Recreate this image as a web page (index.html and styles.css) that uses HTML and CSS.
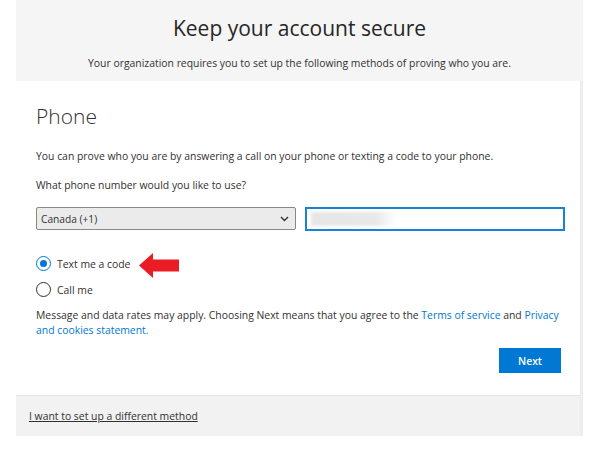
FILE: index.html
```html
<!DOCTYPE html>
<html>
<head>
<meta charset="utf-8">
<link rel="stylesheet" href="styles.css">
</head>
<body>
<div class="page">
  <div class="header">
    <h1 class="title">Keep your account secure</h1>
    <p class="subtitle">Your organization requires you to set up the following methods of proving who you are.</p>
  </div>
  <div class="card">
    <div class="card-body">
      <h2 class="heading">Phone</h2>
      <p class="text intro">You can prove who you are by answering a call on your phone or texting a code to your phone.</p>
      <p class="text question">What phone number would you like to use?</p>
      <div class="inputs">
        <div class="select">
          <span>Canada (+1)</span>
          <svg class="chev" width="9" height="6" viewBox="0 0 9 6"><path d="M1 1l3.5 3.5L8 1" fill="none" stroke="#323130" stroke-width="1.4"/></svg>
        </div>
        <div class="phone"><span class="blur"></span></div>
      </div>
      <div class="options">
        <label class="option">
          <span class="radio checked"><span class="dot"></span></span>
          <span>Text me a code</span>
          <svg class="arrow" width="41" height="25" viewBox="0 0 41 25"><path d="M0 12.5L14 0V6.5H40V18.5H14V25Z" fill="#ea1c24"/></svg>
        </label>
        <label class="option">
          <span class="radio"></span>
          <span>Call me</span>
        </label>
      </div>
      <p class="text legal">Message and data rates may apply. Choosing Next means that you agree to the <a href="#">Terms of service</a> and <a href="#">Privacy and cookies statement.</a></p>
      <div class="actions"><button class="next">Next</button></div>
    </div>
    <div class="footer"><a href="#" class="other">I want to set up a different method</a></div>
  </div>
</div>
</body>
</html>
```
FILE: styles.css
```css
* { box-sizing: border-box; }
body {
  margin: 0;
  background: #fff;
  font-family: "Open Sans", "Noto Sans", sans-serif;
  color: #323130;
}
.page {
  margin-left: 16px;
  width: 567px;
  background: #f5f5f5;
}
.header {
  height: 81px;
  padding-top: 13px;
  text-align: center;
}
.title {
  margin: 0;
  font-weight: 400;
  font-size: 21px;
  line-height: 30px;
  color: #262626;
}
.subtitle {
  margin: 13px 0 0;
  font-size: 10.4px;
  line-height: 14px;
}
.card {
  border-right: 3px solid #ededed;
  background: #fff;
}
.card-body {
  height: 314px;
  padding: 22px 15px 0 20px;
}
.heading {
  margin: 0;
  font-weight: 300;
  font-size: 21px;
  line-height: 26px;
  color: #323130;
}
.text {
  margin: 0;
  font-size: 10.4px;
  line-height: 15px;
}
.intro { margin-top: 20px; }
.question { margin-top: 14px; }
.inputs {
  display: flex;
  gap: 9px;
  margin-top: 14px;
}
.select {
  width: 261px;
  height: 23px;
  border: 1px solid #8a8886;
  border-radius: 2px;
  background: #ebebeb;
  display: flex;
  align-items: center;
  justify-content: space-between;
  padding: 0 6px 0 4px;
  font-size: 10.2px;
}
.phone {
  width: 262px;
  height: 24px;
  border: 2px solid #1a82d6;
  padding: 3px 4px;
}
.blur {
  display: block;
  width: 86px;
  height: 14px;
  background: linear-gradient(90deg, #e6e6e6 0%, #e8e8e8 75%, #fff 100%);
  filter: blur(1.5px);
}
.options {
  margin-top: 25px;
  display: flex;
  flex-direction: column;
  gap: 11px;
}
.option {
  display: flex;
  align-items: center;
  gap: 6px;
  font-size: 10.4px;
  height: 15px;
}
.radio {
  width: 15px;
  height: 15px;
  border: 1px solid #323130;
  border-radius: 50%;
  display: flex;
  align-items: center;
  justify-content: center;
}
.radio.checked { border-color: #0078d4; }
.dot {
  width: 7px;
  height: 7px;
  border-radius: 50%;
  background: #0078d4;
}
.arrow { margin-left: 3px; margin-top: 3px; }
.legal { margin-top: 11px; }
a { color: #0078d4; text-decoration: none; }
.actions {
  display: flex;
  justify-content: flex-end;
  margin-top: 10px;
  padding-right: 4px;
}
.next {
  width: 62px;
  height: 25px;
  border: none;
  background: #0078d4;
  color: #fff;
  font-family: inherit;
  font-size: 10.4px;
  font-weight: 600;
}
.footer {
  height: 41px;
  background: #f2f2f2;
  border-top: 1px solid #e6e6e6;
  padding: 7px 0 0 13px;
}
.other {
  color: #323130;
  text-decoration: underline;
  font-size: 10.4px;
}
```
